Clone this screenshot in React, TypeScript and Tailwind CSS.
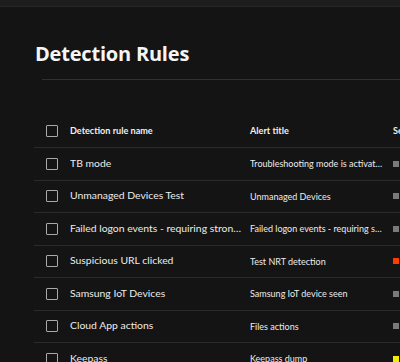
const rules = [
  { name: 'TB mode', alert: 'Troubleshooting mode is activated on device', sev: 'bg-[#7a7a7a]' },
  { name: 'Unmanaged Devices Test', alert: 'Unmanaged Devices', sev: 'bg-[#7a7a7a]' },
  { name: 'Failed logon events - requiring strong authentication', alert: 'Failed logon events - requiring strong auth', sev: 'bg-[#7a7a7a]' },
  { name: 'Suspicious URL clicked', alert: 'Test NRT detection', sev: 'bg-[#ff3c00]' },
  { name: 'Samsung IoT Devices', alert: 'Samsung IoT device seen', sev: 'bg-[#7a7a7a]' },
  { name: 'Cloud App actions', alert: 'Files actions', sev: 'bg-[#7a7a7a]' },
  { name: 'Keepass', alert: 'Keepass dump', sev: 'bg-[#f2ee00]' },
];

function Checkbox() {
  return <div className="w-3 h-3 border border-[#a8a8a8] rounded-[1px] shrink-0" />;
}

export default function App() {
  return (
    <div className="w-[400px] h-[362px] overflow-hidden bg-[#141414] text-[#f0f0f0] font-['Lato',sans-serif]">
      <div className="h-[7px] bg-[#1d1d1d] border-b border-[#262626]" />

      <div className="pl-[35px] pt-[33px]">
        <h1 className="text-[20px] leading-[28px] font-bold tracking-[-0.2px] text-[#f5f5f5] font-['Open_Sans',sans-serif]">Detection Rules</h1>
      </div>
      <div className="ml-[42px] mt-[11px] border-t border-[#303030]" />

      <div className="ml-[34px] mt-[35px]">
        <div className="flex items-center h-[33px] border-b border-[#2a2a2a]">
          <div className="pl-3 w-[36px] shrink-0"><Checkbox /></div>
          <div className="w-[180px] shrink-0 text-[9.1px] font-bold">Detection rule name</div>
          <div className="w-[143px] shrink-0 text-[9.1px] font-bold">Alert title</div>
          <div className="shrink-0 text-[9.1px] font-bold whitespace-nowrap">Severity</div>
        </div>
        {rules.map((r) => (
          <div key={r.name} className="flex items-center h-[32.5px] border-b border-[#2a2a2a]">
            <div className="pl-3 w-[36px] shrink-0"><Checkbox /></div>
            <div className="w-[180px] shrink-0 pr-2 text-[10.4px] text-[#ececec] truncate">{r.name}</div>
            <div className="w-[143px] shrink-0 pr-[10px] text-[9px] text-[#ececec] truncate">{r.alert}</div>
            <div className={`w-[6px] h-[6px] shrink-0 ${r.sev}`} />
          </div>
        ))}
      </div>
    </div>
  );
}
